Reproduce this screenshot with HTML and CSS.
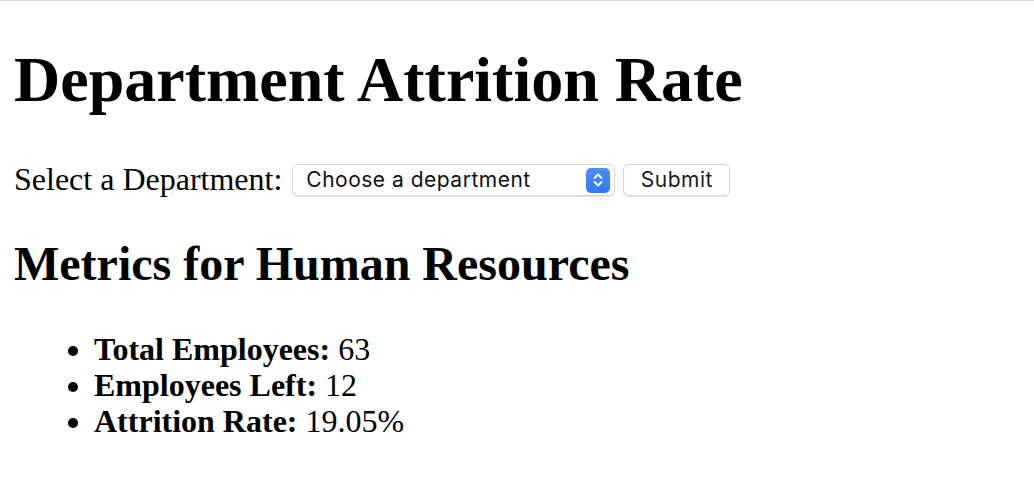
FILE: index.html
```html
<!DOCTYPE html>
<html lang="en">
<head>
<meta charset="utf-8">
<title>Department Attrition Rate</title>
<link rel="stylesheet" href="styles.css">
</head>
<body>
<h1 class="title">Department Attrition Rate</h1>
<form class="picker">
  <label for="dept" class="picker-label">Select a Department:</label>
  <span class="select-wrap">
    <select id="dept" class="select">
      <option>Choose a department</option>
      <option>Human Resources</option>
      <option>Research &amp; Development</option>
      <option>Sales</option>
    </select>
    <span class="select-arrow" aria-hidden="true">
      <svg width="12" height="16" viewBox="0 0 12 16"><path d="M2.5 6 L6 2.5 L9.5 6 M2.5 10 L6 13.5 L9.5 10" fill="none" stroke="#fff" stroke-width="1.8" stroke-linecap="round" stroke-linejoin="round"/></svg>
    </span>
  </span>
  <button type="submit" class="btn">Submit</button>
</form>
<h2 class="subtitle">Metrics for Human Resources</h2>
<ul class="metrics">
  <li><strong>Total Employees:</strong> 63</li>
  <li><strong>Employees Left:</strong> 12</li>
  <li><strong>Attrition Rate:</strong> 19.05%</li>
</ul>
</body>
</html>
```
FILE: styles.css
```css
html {
  border-top: 1px solid #d8d8d8;
  background: #fff;
}
body {
  margin: 0 14px 16px;
  font-family: "Liberation Serif", "Times New Roman", serif;
  font-size: 32px;
  color: #000;
}
.title {
  font-size: 64px;
  margin: 42px 0;
}
.picker {
  display: flex;
  align-items: center;
  height: 37px;
  padding-top: 2px;
}
.picker-label {
  margin-right: 10px;
}
.select-wrap {
  position: relative;
  display: inline-block;
  margin-right: 8px;
}
.select {
  appearance: none;
  -webkit-appearance: none;
  width: 323px;
  height: 32px;
  box-sizing: border-box;
  padding: 0 40px 0 13px;
  font-family: "Inter", "Roboto", sans-serif;
  font-size: 21px;
  letter-spacing: 0.5px;
  color: #111;
  background: #fff;
  border: 1px solid #d6d6d6;
  border-radius: 6px;
  box-shadow: 0 1px 1px rgba(0,0,0,0.12);
  display: block;
}
.select-arrow {
  position: absolute;
  right: 5px;
  top: 4px;
  width: 24px;
  height: 25px;
  border-radius: 5px;
  background: linear-gradient(#4d8ff8, #2f77f2);
  display: flex;
  align-items: center;
  justify-content: center;
  pointer-events: none;
}
.btn {
  height: 32px;
  width: 107px;
  box-sizing: border-box;
  font-family: "Inter", "Roboto", sans-serif;
  font-size: 21px;
  letter-spacing: 0.5px;
  color: #1a1a1a;
  background: #fff;
  border: 1px solid #d6d6d6;
  border-radius: 6px;
  box-shadow: 0 1px 1px rgba(0,0,0,0.12);
  padding: 0;
}
.subtitle {
  font-size: 48px;
  margin: 38px 0 40px;
}
.metrics {
  margin: 32px 0;
  padding-left: 80px;
}
.metrics li {
  line-height: 36px;
}
```
